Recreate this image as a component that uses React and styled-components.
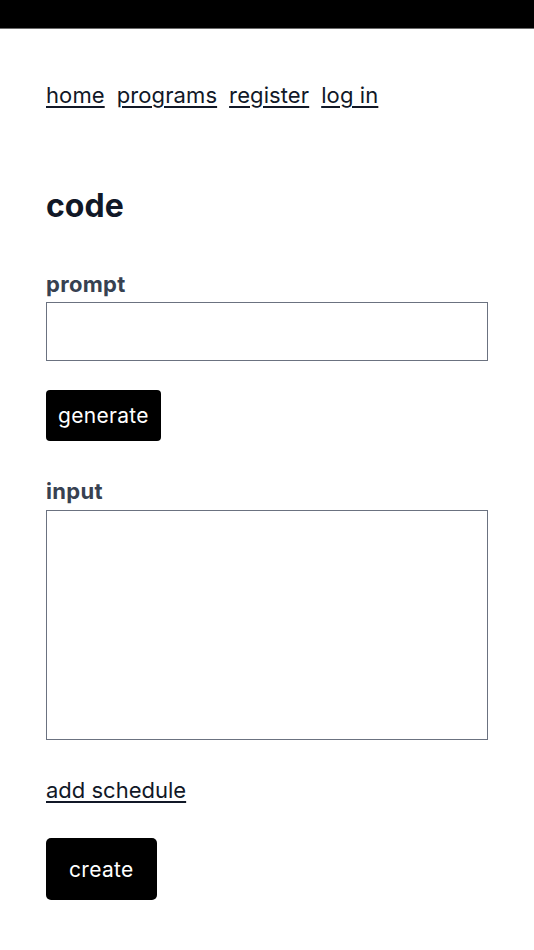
import React from 'react'
import styled, { createGlobalStyle } from 'styled-components'

const GlobalStyle = createGlobalStyle`
  body {
    margin: 0;
    background: #fff;
    font-family: Inter, "Noto Sans", sans-serif;
  }
`

const TopBar = styled.div`
  height: 28px;
  background: #000;
  border-bottom: 1px solid #6b6b6b;
`

const Page = styled.main`
  padding: 53px 46px 40px;
  display: flex;
  flex-direction: column;
`

const Nav = styled.nav`
  display: flex;
  gap: 12px;
`

const NavLink = styled.a`
  font-size: 22px;
  letter-spacing: 0.1px;
  color: #111827;
  text-decoration: underline;
  text-underline-offset: 3px;
  text-decoration-thickness: 1.5px;
  cursor: pointer;
`

const Heading = styled.h1`
  margin: 78px 0 0;
  font-size: 32px;
  font-weight: 700;
  color: #111827;
`

const Form = styled.form`
  display: flex;
  flex-direction: column;
  align-items: flex-start;
  margin-top: 45px;
`

const Label = styled.label`
  font-size: 22px;
  font-weight: 700;
  letter-spacing: 0.3px;
  color: #374151;
  line-height: 28px;
  margin-bottom: 4px;
`

const TextInput = styled.input`
  box-sizing: border-box;
  width: 100%;
  height: 59px;
  border: 1.5px solid #6b7280;
  border-radius: 0;
  margin: 0;
`

const TextArea = styled.textarea`
  box-sizing: border-box;
  width: 100%;
  height: 230px;
  border: 1.5px solid #6b7280;
  border-radius: 0;
  resize: none;
  margin: 1px 0 0;
`

const Button = styled.button`
  background: #000;
  color: #fff;
  border: none;
  border-radius: ${p => p.$big ? '5px' : '4px'};
  font-family: Inter, "Noto Sans", sans-serif;
  font-size: 21px;
  letter-spacing: 0.3px;
  height: ${p => p.$big ? '62px' : '51px'};
  padding: 0 ${p => p.$big ? '23px' : '12px'};
  margin-top: ${p => p.$top || '0'};
  cursor: pointer;
`

const Spacer = styled.div`
  height: ${p => p.$h}px;
`

const TextLink = styled.a`
  font-size: 22px;
  color: #111827;
  text-decoration: underline;
  text-underline-offset: 3px;
  text-decoration-thickness: 1.5px;
  cursor: pointer;
`

export default function App() {
  return (
    <>
      <GlobalStyle />
      <TopBar />
      <Page>
        <Nav>
          <NavLink>home</NavLink>
          <NavLink>programs</NavLink>
          <NavLink>register</NavLink>
          <NavLink>log in</NavLink>
        </Nav>
        <Heading>code</Heading>
        <Form onSubmit={e => e.preventDefault()}>
          <Label>prompt</Label>
          <TextInput type="text" />
          <Button type="button" $top="29px">generate</Button>
          <Spacer $h={36} />
          <Label>input</Label>
          <TextArea />
          <Spacer $h={37} />
          <TextLink>add schedule</TextLink>
          <Button type="submit" $big $top="35px">create</Button>
        </Form>
      </Page>
    </>
  )
}
